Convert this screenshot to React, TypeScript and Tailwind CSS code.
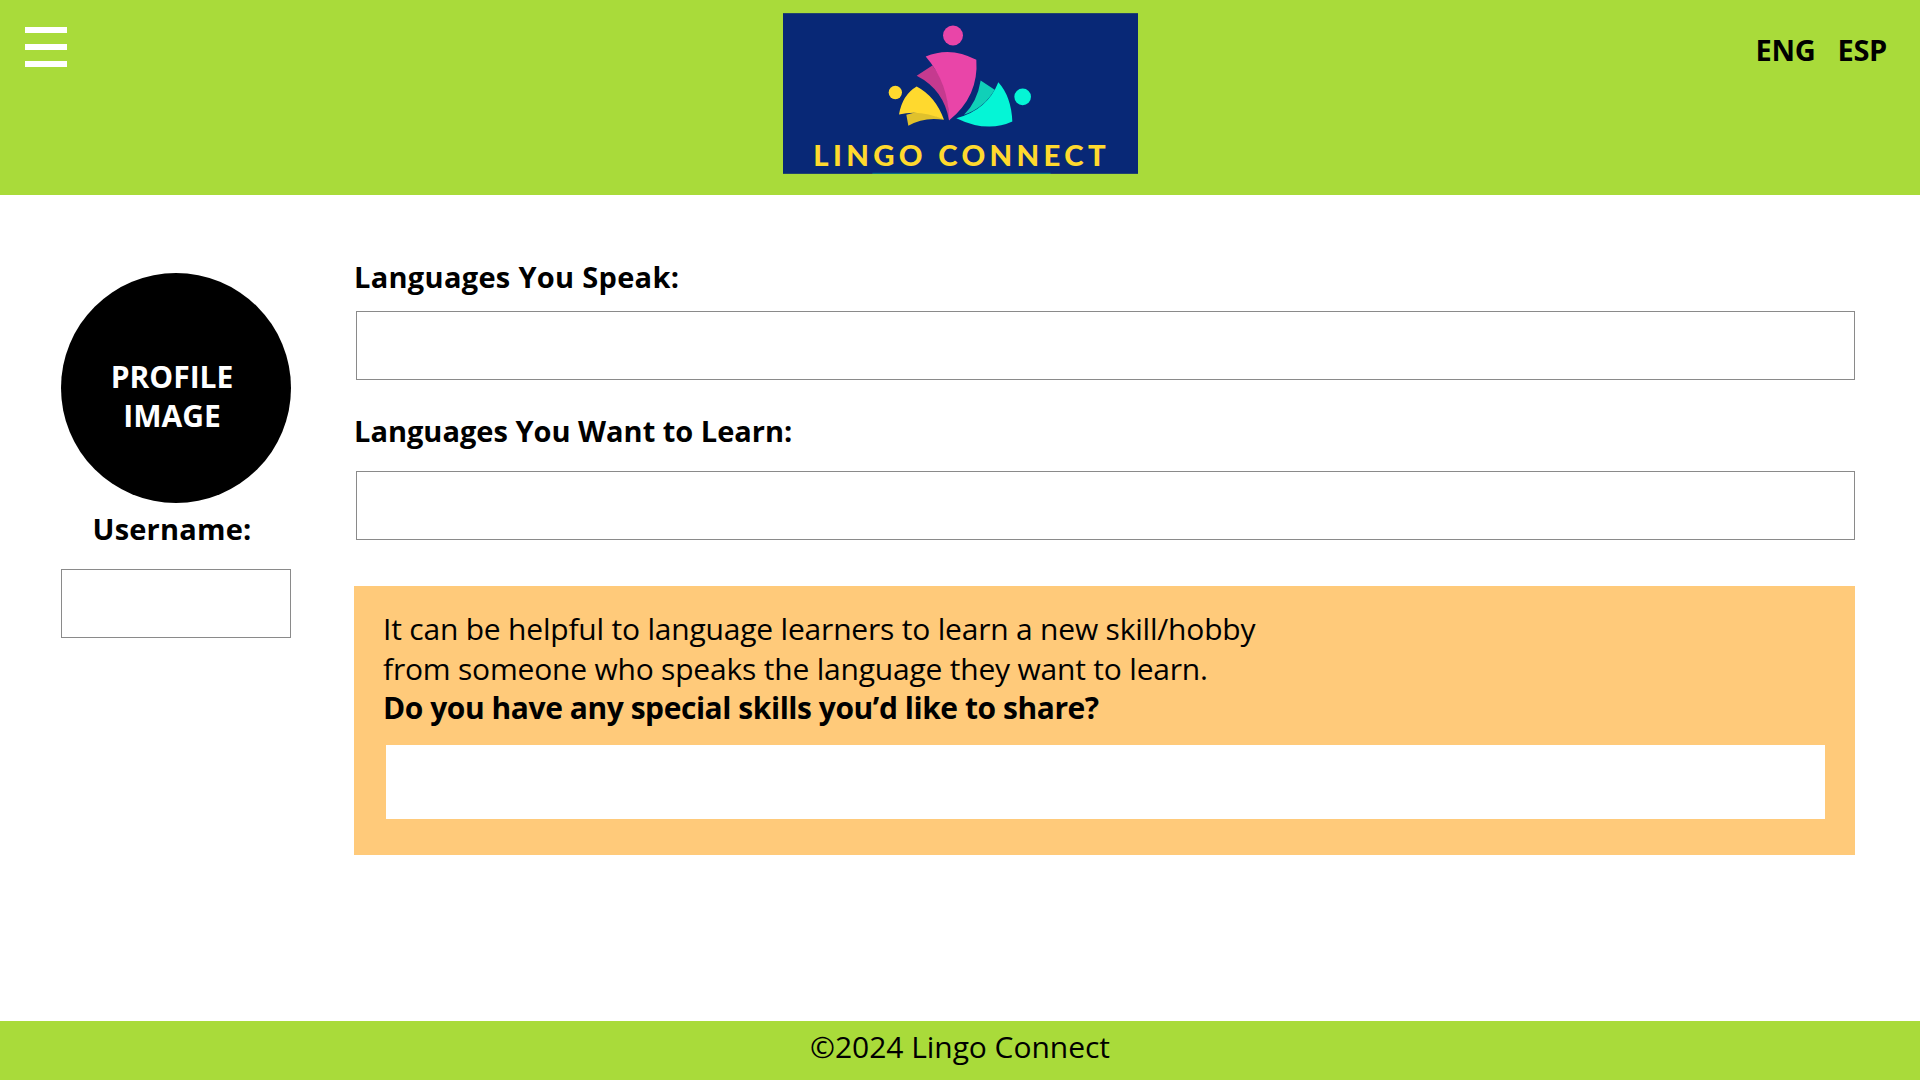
export default function App() {
  const font = "font-['Open_Sans',sans-serif]";
  return (
    <div className={`${font} w-[1920px] h-[1080px] bg-white text-black flex flex-col overflow-hidden`}>
      <header className="h-[195px] bg-[#a9db3a] flex justify-between shrink-0">
        <div className="w-[300px] pl-[25px] pt-[27px] flex flex-col gap-[11px]">
          <div className="w-[42px] h-[6px] bg-white" />
          <div className="w-[42px] h-[6px] bg-white" />
          <div className="w-[42px] h-[6px] bg-white" />
        </div>
        <div className="pt-[13px]">
          <svg width="355" height="161" viewBox="67 40 1065 482" className="block">
            <rect x="67" y="40" width="1065" height="482" fill="#082876" />
            <rect x="335" y="519" width="535" height="3" fill="#0f7f8c" />
            <circle cx="577" cy="107" r="30" fill="#e945a8" />
            <path d="M468,228 L515,197 Q568,260 565,362 Q550,270 468,228Z" fill="#c53a8f" />
            <path d="M495,170 Q570,138 647,180 Q655,290 565,362 Q565,250 495,170Z" fill="#e945a8" />
            <circle cx="404" cy="278" r="20" fill="#ffd92e" />
            <path d="M437,345 Q490,325 550,360 Q490,350 443,378Z" fill="#e0c12c" />
            <path d="M415,344 Q425,285 468,260 Q525,290 550,360 Q480,328 415,344Z" fill="#ffd92e" />
            <circle cx="786" cy="291" r="25" fill="#05f5d6" />
            <path d="M610,345 Q650,305 660,242 L702,270 Q670,325 610,345Z" fill="#10d0b8" />
            <path d="M587,355 Q680,330 713,247 Q752,290 755,365 Q680,400 587,355Z" fill="#05f5d6" />
            <text x="158" y="498" textLength="877" lengthAdjust="spacing" fontSize="88" fontWeight="900" fill="#ffd92e" fontFamily="Lato, sans-serif">LINGO CONNECT</text>
          </svg>
        </div>
        <div className="w-[300px] flex justify-end gap-[22px] pr-[33px] pt-[32px] text-[29px] leading-[36px] font-bold tracking-[-0.3px]">
          <span>ENG</span>
          <span>ESP</span>
        </div>
      </header>

      <main className="flex-1 flex pl-[61px] pr-[65px]">
        <aside className="w-[230px] pt-[78px] flex flex-col shrink-0">
          <div className="w-[230px] h-[230px] rounded-full bg-black text-white flex items-center justify-center text-center text-[30px] leading-[39px] font-bold tracking-[0px] pr-[8px] pt-[16px]">
            <span>PROFILE<br />IMAGE</span>
          </div>
          <div className="mt-[6px] h-[40px] pr-[8px] text-center text-[29px] leading-[40px] font-bold tracking-[0.2px]">Username:</div>
          <div className="mt-[20px] h-[69px] border border-[#8a8a8a]" />
        </aside>

        <section className="ml-[63px] flex-1 pt-[62px] flex flex-col">
          <div className="h-[40px] text-[29px] leading-[40px] font-bold tracking-[0.3px]">Languages You Speak:</div>
          <div className="mt-[14px] ml-[2px] h-[69px] border border-[#8a8a8a]" />
          <div className="mt-[31px] h-[40px] text-[29px] leading-[40px] font-bold">Languages You Want to Learn:</div>
          <div className="mt-[20px] ml-[2px] h-[69px] border border-[#8a8a8a]" />
          <div className="mt-[46px] h-[269px] bg-[#ffca7a] pt-[23px] pl-[29px] pr-[30px]">
            <p className="text-[30px] leading-[39.5px] tracking-[-0.2px]">
              It can be helpful to language learners to learn a new skill/hobby<br />
              from someone who speaks the language they want to learn.<br />
              <b className="font-bold tracking-[-0.45px]">Do you have any special skills you’d like to share?</b>
            </p>
            <div className="mt-[17.5px] ml-[3px] h-[74px] bg-white" />
          </div>
        </section>
      </main>

      <footer className="h-[59px] bg-[#a9db3a] shrink-0 flex items-center justify-center text-[30px] tracking-[-0.05px] pb-[8px]">©2024 Lingo Connect</footer>
    </div>
  );
}
